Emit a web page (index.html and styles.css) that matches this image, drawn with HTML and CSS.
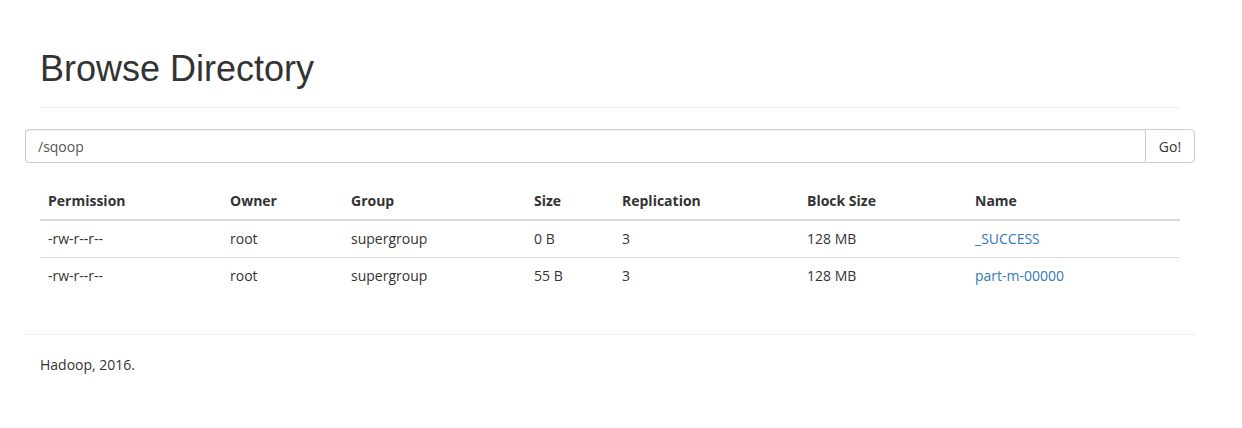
FILE: index.html
```html
<!DOCTYPE html>
<html>
<head>
<meta charset="utf-8">
<title>Browsing HDFS</title>
<link rel="stylesheet" href="styles.css">
</head>
<body>
<div class="container">
  <div class="page-header">
    <h1>Browse Directory</h1>
  </div>
  <div class="input-group">
    <input class="form-control" type="text" value="/sqoop">
    <button class="btn" type="button">Go!</button>
  </div>
  <div class="table-wrap">
    <table class="table">
      <colgroup>
        <col class="c1"><col class="c2"><col class="c3"><col class="c4"><col class="c5"><col class="c6"><col class="c7">
      </colgroup>
      <thead>
        <tr><th>Permission</th><th>Owner</th><th>Group</th><th>Size</th><th>Replication</th><th>Block Size</th><th>Name</th></tr>
      </thead>
      <tbody>
        <tr><td>-rw-r--r--</td><td>root</td><td>supergroup</td><td>0 B</td><td>3</td><td>128 MB</td><td><a href="#">_SUCCESS</a></td></tr>
        <tr><td>-rw-r--r--</td><td>root</td><td>supergroup</td><td>55 B</td><td>3</td><td>128 MB</td><td><a href="#">part-m-00000</a></td></tr>
      </tbody>
    </table>
  </div>
  <hr class="footer-rule">
  <div class="footer">
    <p>Hadoop, 2016.</p>
  </div>
</div>
</body>
</html>
```
FILE: styles.css
```css
* { box-sizing: border-box; }
html, body { margin: 0; padding: 0; background: #fff; }
body {
  font-family: "Open Sans", "Noto Sans", sans-serif;
  font-size: 14px;
  line-height: 20px;
  color: #333;
}
.container {
  width: 1170px;
  margin-left: 25px;
  padding-top: 8px;
}
.page-header {
  margin: 40px 15px 21px;
  padding-bottom: 9px;
  border-bottom: 1px solid #eee;
}
.page-header h1 {
  margin: 0 0 9px;
  padding-top: 1px;
  font-family: "Liberation Sans", Arial, sans-serif;
  font-weight: 400;
  font-size: 36px;
  line-height: 40px;
  color: #333;
}
.input-group {
  display: flex;
  height: 34px;
}
.form-control {
  flex: 1;
  height: 34px;
  margin: 0;
  padding: 6px 12px;
  font-family: inherit;
  font-size: 14px;
  color: #555;
  border: 1px solid #ccc;
  border-right: 0;
  border-radius: 4px 0 0 4px;
  box-shadow: inset 0 1px 1px rgba(0,0,0,.075);
  outline: none;
}
.btn {
  width: 50px;
  height: 34px;
  margin: 0;
  padding: 6px 0;
  font-family: inherit;
  font-size: 14px;
  color: #333;
  background: #fff;
  border: 1px solid #ccc;
  border-radius: 0 4px 4px 0;
}
.table-wrap {
  padding: 20px 15px 0;
}
.table {
  width: 1140px;
  border-collapse: collapse;
  table-layout: fixed;
  margin-bottom: 40px;
}
.c1 { width: 182px; }
.c2 { width: 121px; }
.c3 { width: 183px; }
.c4 { width: 88px; }
.c5 { width: 185px; }
.c6 { width: 168px; }
.c7 { width: 213px; }
.table th, .table td {
  padding: 8px;
  text-align: left;
  vertical-align: top;
  line-height: 20px;
}
.table th {
  font-weight: 700;
  border-bottom: 2px solid #ddd;
}
.table tbody tr + tr td {
  border-top: 1px solid #ddd;
}
.table tbody tr:first-child td { border-top: 0; }
.table a {
  color: #337ab7;
  text-decoration: none;
}
.footer-rule {
  margin: 19px 0 20px;
  border: 0;
  border-top: 1px solid #eee;
}
.footer {
  padding: 0 15px;
}
.footer p { margin: 0; }
```
